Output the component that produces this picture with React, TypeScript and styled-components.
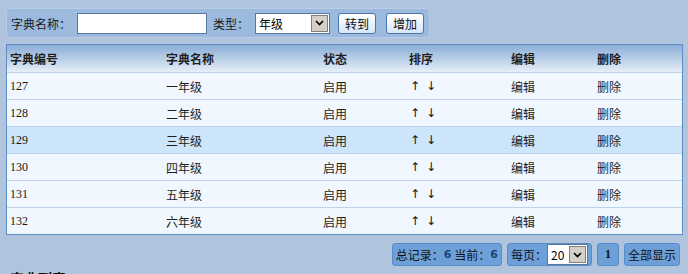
import styled, { createGlobalStyle } from 'styled-components';

const GlobalStyle = createGlobalStyle`
    body {
        margin: 0;
        background-color: #B0C4DE;
        font-family: "Noto Sans CJK SC", "DejaVu Sans", sans-serif;
        font-size: 12px;
        color: #222;
    }
`;

const Page = styled.div`
    padding: 8px 6px 0 6px;
    width: 676px;
`;

const Toolbar = styled.div`
    display: flex;
    align-items: center;
    width: 414px;
    height: 28px;
    padding: 0 4px;
    background-color: #9CBADD;
    border: 1px solid #B9CDE6;
    border-radius: 5px;
    gap: 6px;
    & > * {
        flex-shrink: 0;
    }
`;

const Label = styled.span`
    font-size: 12px;
    color: #1a1a1a;
    white-space: nowrap;
`;

const TextBox = styled.div`
    width: 128px;
    height: 19px;
    background-color: #fff;
    border: 1px solid #56779F;
`;

const SelectBox = styled.div<{ $width: number }>`
    display: flex;
    align-items: center;
    justify-content: space-between;
    width: ${(p) => p.$width}px;
    height: 19px;
    background-color: #fff;
    border: 1px solid #56779F;
    padding-left: 3px;
    font-size: 12px;
    color: #000;
    flex-shrink: 0;
`;

const SelectArrow = styled.span`
    display: flex;
    align-items: center;
    justify-content: center;
    width: 15px;
    height: 15px;
    margin-right: 1px;
    background-color: #D4D0C8;
    border: 1px solid #808080;
`;

const ToolButton = styled.button<{ $gap: number }>`
    width: 38px;
    height: 21px;
    padding: 0;
    white-space: nowrap;
    font-family: inherit;
    font-size: 12px;
    color: #111;
    background: linear-gradient(#ffffff, #D6E6F8);
    border: 1px solid #4C75A8;
    border-radius: 3px;
    margin-left: ${(p) => p.$gap}px;
`;

const Grid = styled.div`
    margin-top: 6px;
    width: 675px;
    border: 1px solid #5E8DC4;
    background-color: #F0F7FF;
`;

const Row = styled.div<{ $head?: boolean; $hot?: boolean }>`
    display: grid;
    grid-template-columns: 156px 157px 86px 102px 86px 88px;
    align-items: center;
    height: ${(p) => (p.$head ? 27 : 26)}px;
    padding-left: 3px;
    border-bottom: 1px solid #BCD3EA;
    background: ${(p) =>
        p.$head ? 'linear-gradient(#8AADD7, #E6EFF8)' : p.$hot ? '#CCE5FB' : '#F0F7FF'};
    font-weight: ${(p) => (p.$head ? 'bold' : 'normal')};
    &:last-child {
        border-bottom: none;
    }
`;

const Cell = styled.span`
    font-size: 12px;
    color: #1e1e1e;
    white-space: nowrap;
`;

const IdCell = styled(Cell)`
    font-family: "Liberation Serif", serif;
    color: #1e1410;
`;

const Arrows = styled.span`
    display: flex;
    gap: 6px;
    padding-left: 1px;
    font-family: "DejaVu Sans", sans-serif;
    font-size: 12px;
    color: #111;
`;

const Pager = styled.div`
    display: flex;
    justify-content: flex-end;
    gap: 5px;
    margin-top: 8px;
    width: 674px;
`;

const PagerBox = styled.div`
    display: flex;
    align-items: center;
    height: 21px;
    padding: 0 3px;
    background-color: #6DA0D8;
    border: 1px solid #5A8DC8;
    border-radius: 3px;
    font-size: 12px;
    color: #111;
    white-space: nowrap;
`;

const Num = styled.b`
    font-family: "DejaVu Sans", sans-serif;
    font-size: 11px;
    color: #1B3F7A;
    margin: 0 3px 0 0;
    &:last-child {
        margin: 0;
    }
`;

const PageNum = styled(PagerBox)`
    padding: 0 7px;
    font-family: "Liberation Serif", serif;
    font-weight: bold;
`;

const Heading = styled.div`
    margin-top: 2px;
    padding-left: 4px;
    font-size: 14px;
    font-weight: bold;
    color: #111;
`;

function Chevron() {
    return (
        <svg width="9" height="6" viewBox="0 0 9 6">
            <path d="M1 1 L4.5 4.5 L8 1" fill="none" stroke="#000" strokeWidth="1.6" />
        </svg>
    );
}

const rows = [
    { id: 127, name: '一年级' },
    { id: 128, name: '二年级' },
    { id: 129, name: '三年级' },
    { id: 130, name: '四年级' },
    { id: 131, name: '五年级' },
    { id: 132, name: '六年级' },
];

export default function App() {
    return (
        <Page>
            <GlobalStyle />
            <Toolbar>
                <Label>字典名称：</Label>
                <TextBox />
                <Label>类型：</Label>
                <SelectBox $width={70}>
                    年级
                    <SelectArrow>
                        <Chevron />
                    </SelectArrow>
                </SelectBox>
                <ToolButton $gap={2}>转到</ToolButton>
                <ToolButton $gap={4}>增加</ToolButton>
            </Toolbar>
            <Grid>
                <Row $head>
                    <Cell>字典编号</Cell>
                    <Cell>字典名称</Cell>
                    <Cell>状态</Cell>
                    <Cell>排序</Cell>
                    <Cell>编辑</Cell>
                    <Cell>删除</Cell>
                </Row>
                {rows.map((r) => (
                    <Row key={r.id} $hot={r.id === 129}>
                        <IdCell>{r.id}</IdCell>
                        <Cell>{r.name}</Cell>
                        <Cell>启用</Cell>
                        <Arrows>
                            <span>↑</span>
                            <span>↓</span>
                        </Arrows>
                        <Cell>编辑</Cell>
                        <Cell>删除</Cell>
                    </Row>
                ))}
            </Grid>
            <Pager>
                <PagerBox>
                    总记录：<Num>6</Num>当前：<Num>6</Num>
                </PagerBox>
                <PagerBox>
                    每页：
                    <SelectBox $width={36}>
                        20
                        <SelectArrow>
                            <Chevron />
                        </SelectArrow>
                    </SelectBox>
                </PagerBox>
                <PageNum>1</PageNum>
                <PagerBox>全部显示</PagerBox>
            </Pager>
            <Heading>字典列表</Heading>
        </Page>
    );
}
